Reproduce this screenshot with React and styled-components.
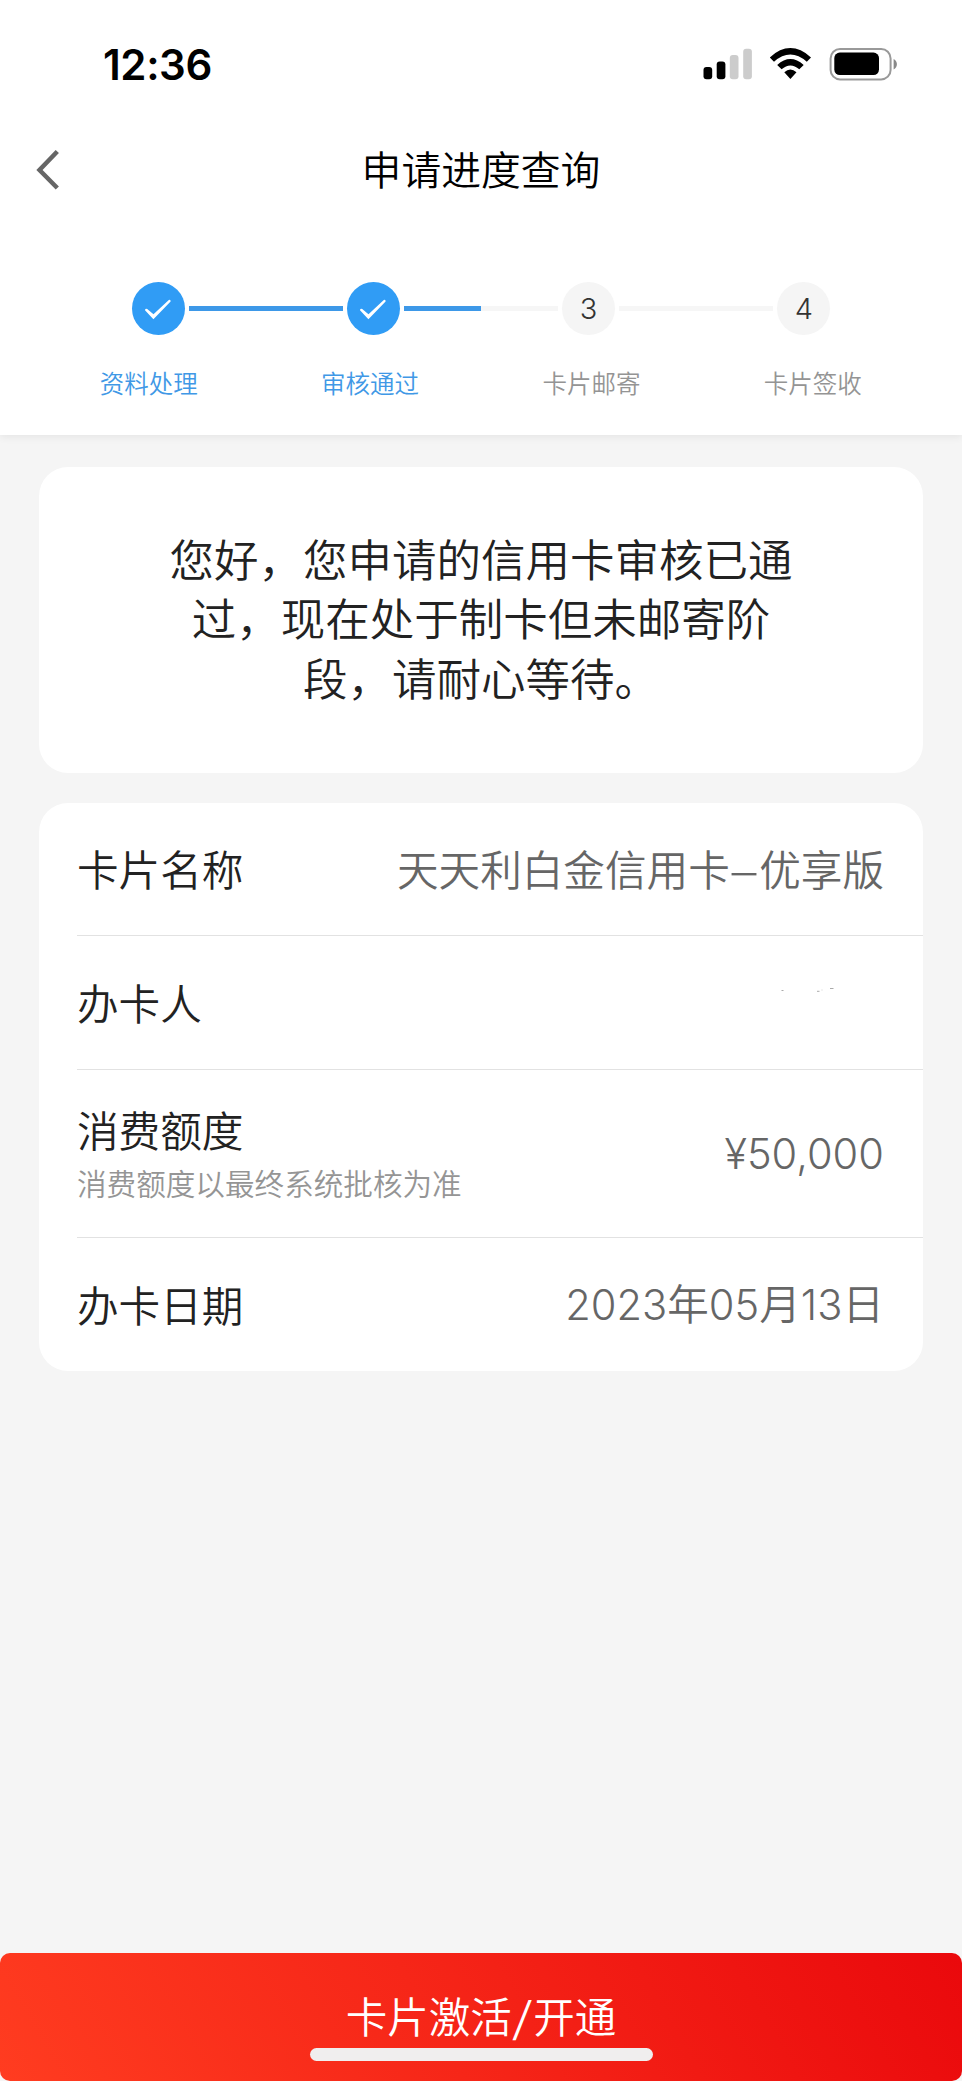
import React from "react";
import styled, { createGlobalStyle } from "styled-components";

const GlobalStyle = createGlobalStyle`
  body {
    margin: 0;
    background: #f5f5f5;
  }

  * {
    box-sizing: border-box;
  }
`;

const Screen = styled.div`
  display: flex;
  flex-direction: column;
  width: 962px;
  height: 2081px;
  background: #f5f5f5;
  color: #222;
  font-family: "Noto Sans CJK SC", sans-serif;
  font-weight: 350;
`;

const Header = styled.header`
  height: 435px;
  background: #fff;
  box-shadow: 0 2px 8px rgba(0, 0, 0, 0.07);
`;

const StatusBar = styled.div`
  display: flex;
  align-items: center;
  justify-content: space-between;
  height: 128px;
  padding: 0 62px 0 103px;
`;

const Time = styled.span`
  font-family: Inter, sans-serif;
  font-size: 42px;
  font-weight: 600;
  letter-spacing: -0.4px;
  color: #000;
`;

const NavBar = styled.div`
  display: grid;
  grid-template-columns: 100px 1fr 100px;
  align-items: center;
  height: 84px;
`;

const BackButton = styled.button`
  display: flex;
  padding: 0 0 0 36px;
  border: none;
  background: none;
  cursor: pointer;
`;

const Title = styled.h1`
  margin: 0;
  padding-bottom: 4px;
  font-size: 39.8px;
  font-weight: 350;
  line-height: 60px;
  text-align: center;
  color: #000;
`;

const Steps = styled.div`
  display: flex;
  align-items: center;
  gap: 4px;
  width: 699px;
  height: 53px;
  margin: 70px 0 0 131.5px;
`;

const StepDot = styled.div`
  display: flex;
  flex: none;
  align-items: center;
  justify-content: center;
  width: 53px;
  height: 53px;
  border-radius: 50%;
  background: ${(props) => (props.$done ? "#309cf5" : "#f5f5f5")};
  color: #333;
  font-family: Inter, sans-serif;
  font-size: 29px;
  font-weight: 300;
`;

const StepLine = styled.div`
  flex: 1;
  height: 5px;
  background: linear-gradient(
    to right,
    #3d98e8 ${(props) => props.$progress}%,
    #f6f6f6 ${(props) => props.$progress}%
  );
`;

const StepLabels = styled.div`
  display: grid;
  grid-template-columns: repeat(4, 221.4px);
  margin: 30px 0 0 38px;
`;

const StepLabel = styled.span`
  font-size: 24.5px;
  line-height: 36px;
  text-align: center;
  color: ${(props) => (props.$done ? "#4098e6" : "#949494")};
`;

const Content = styled.main`
  display: flex;
  flex: 1;
  flex-direction: column;
  gap: 30px;
  padding: 32px 39px 0;
`;

const Card = styled.section`
  border-radius: 29px;
  background: #fff;
`;

const Notice = styled(Card)`
  height: 306px;
  padding: 61px 120px 0;
  font-size: 44.5px;
  line-height: 59.4px;
  text-align: center;
`;

const Row = styled.div`
  display: flex;
  align-items: center;
  justify-content: space-between;
  height: ${(props) => props.$height}px;
  margin-left: 38px;
  padding-right: 39px;
  border-bottom: ${(props) => (props.$last ? "none" : "1px solid #e2e2e2")};
  font-size: 41.6px;
  line-height: 60px;
`;

const Label = styled.div`
  padding-bottom: 2px;
`;

const Hint = styled.div`
  padding-bottom: 3px;
  font-size: 29.6px;
  line-height: 44px;
  color: #959595;
`;

const Value = styled.div`
  padding-bottom: ${(props) => (props.$numeric ? 0 : 2)}px;
  color: #666;
  font-family: ${(props) => (props.$numeric ? "Inter, " : "")}"Noto Sans CJK SC", sans-serif;
  font-weight: 350;
  letter-spacing: ${(props) => props.$spacing || 0}px;
`;

const Dash = styled.span`
  display: inline-block;
  margin: 0 3.6px;
  transform: scaleX(1.35);
`;

const ActivateButton = styled.button`
  display: flex;
  flex-direction: column;
  align-items: center;
  height: 128px;
  padding: 32px 0 0;
  border: none;
  border-radius: 10px;
  background: linear-gradient(60deg, #ff3c20 0%, #f62618 45%, #ea090c 100%);
  color: #fff;
  font-family: inherit;
  font-size: 41.5px;
  font-weight: 350;
  line-height: 60px;
  cursor: pointer;
`;

const Slash = styled.span`
  display: inline-block;
  margin: 0 2.5px;
  transform: scaleX(1.25);
`;

const HomeIndicator = styled.span`
  width: 343px;
  height: 13px;
  margin-top: 3px;
  border-radius: 7px;
  background: #f0eeee;
`;

const ButtonBar = styled.footer`
  display: grid;
  background: #f5f5f5;
`;

const StatusIcons = () => (
  <svg width="198" height="40" viewBox="702 44 198 40">
    <rect x="703.5" y="67" width="8.7" height="12.3" rx="3" fill="#000" />
    <rect x="716.7" y="61.5" width="8.7" height="17.8" rx="3" fill="#000" />
    <rect x="729.8" y="55" width="8.7" height="24.3" rx="3" fill="#ccc" />
    <rect x="743.2" y="48.7" width="8.7" height="30.6" rx="3" fill="#ccc" />
    <path
      d="M769.8 57.4Q790.3 38.8 811 57.4L806.8 61.7Q790.3 47.3 774 61.7ZM777.2 64.9Q790.3 53.2 803.7 64.9L799.3 69.3Q790.3 61.7 781.6 69.3ZM784.3 72.2Q790.3 67 796.5 72.2L790.4 79Z"
      fill="#000"
    />
    <rect x="830.6" y="49" width="60" height="30.4" rx="9.5" fill="none" stroke="#999" strokeWidth="2" />
    <rect x="834.3" y="52.6" width="44.7" height="22.5" rx="5.5" fill="#000" />
    <path d="M893.6 59C898 61 898 67.5 893.6 69.5Z" fill="#888" />
  </svg>
);

const CheckIcon = () => (
  <svg width="28" height="22" viewBox="0 0 28 22">
    <path
      d="M1 12.2Q1.2 10.4 3.2 11L9.5 16.2L24.8 2Q26.8 1.2 26.6 3.4L9.4 21.2Z"
      fill="#fff"
    />
  </svg>
);

// what is left of the card holder's erased name
const ErasedName = () => (
  <svg width="110" height="42" viewBox="774 982 110 42">
    <path d="M781.5 990.5h2M817 991.3h2.5M830 988.5h3.5" stroke="#aaa" strokeWidth="1" />
    <path d="M821 990h2" stroke="#e8e8e8" strokeWidth="1" />
  </svg>
);

const steps = [
  { label: "资料处理", done: true, progress: 100 },
  { label: "审核通过", done: true, progress: 50 },
  { label: "卡片邮寄", done: false, progress: 0 },
  { label: "卡片签收", done: false },
];

const App = () => {
  return (
    <Screen>
      <GlobalStyle />
      <Header>
        <StatusBar>
          <Time>12:36</Time>
          <StatusIcons />
        </StatusBar>
        <NavBar>
          <BackButton aria-label="返回">
            <svg width="24" height="42" viewBox="0 0 24 42">
              <path d="M21.3 2.5L3.5 21L21.3 39" fill="none" stroke="#666" strokeWidth="4.5" />
            </svg>
          </BackButton>
          <Title>申请进度查询</Title>
        </NavBar>
        <Steps>
          {steps.map((step, index) => (
            <React.Fragment key={step.label}>
              <StepDot $done={step.done}>{step.done ? <CheckIcon /> : index + 1}</StepDot>
              {index < steps.length - 1 && <StepLine $progress={step.progress} />}
            </React.Fragment>
          ))}
        </Steps>
        <StepLabels>
          {steps.map((step) => (
            <StepLabel key={step.label} $done={step.done}>
              {step.label}
            </StepLabel>
          ))}
        </StepLabels>
      </Header>
      <Content>
        <Notice>
          您好，您申请的信用卡审核已通
          <br />
          过，现在处于制卡但未邮寄阶
          <br />
          段，请耐心等待。
        </Notice>
        <Card>
          <Row $height={133}>
            <Label>卡片名称</Label>
            <Value>
              天天利白金信用卡<Dash>–</Dash>优享版
            </Value>
          </Row>
          <Row $height={134}>
            <Label>办卡人</Label>
            <ErasedName />
          </Row>
          <Row $height={168}>
            <div>
              <Label>消费额度</Label>
              <Hint>消费额度以最终系统批核为准</Hint>
            </div>
            <Value $numeric $spacing={0}>
              ¥50,000
            </Value>
          </Row>
          <Row $height={133} $last>
            <Label>办卡日期</Label>
            <Value $numeric $spacing={0}>
              2023年05月13日
            </Value>
          </Row>
        </Card>
      </Content>
      <ButtonBar>
        <ActivateButton>
          <span>
            卡片激活<Slash>/</Slash>开通
          </span>
          <HomeIndicator />
        </ActivateButton>
      </ButtonBar>
    </Screen>
  );
};

export default App;
